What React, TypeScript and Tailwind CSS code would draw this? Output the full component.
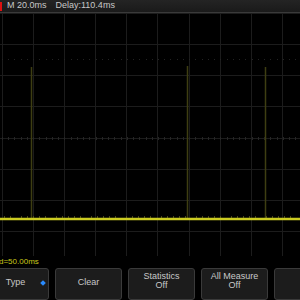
import React from "react";

const V = [2, 33, 64, 95, 126, 157, 189, 220, 251, 282];
const H = [0, 31, 62, 93, 125, 156, 187, 218];

function Scope() {
  const ticks: number[] = [];
  for (let x = 2; x < 300; x += 6.24) ticks.push(Math.round(x) + 0.5);
  const noise: number[] = [];
  for (let x = 3; x < 300; x += 7) noise.push(x + ((x * 37) % 5));
  return (
    <svg width={300} height={250} className="block">
      <rect x={0} y={0} width={300} height={250} fill="#000" />
      {V.map((x) => (
        <line key={"v" + x} x1={x + 0.5} y1={0} x2={x + 0.5} y2={249} stroke="#1c1c1c" strokeWidth={1} />
      ))}
      {H.map((y) => (
        <line key={"h" + y} x1={0} y1={y + 0.5} x2={300} y2={y + 0.5} stroke="#1c1c1c" strokeWidth={1} />
      ))}
      <line x1={0} y1={249.5} x2={300} y2={249.5} stroke="#353535" strokeWidth={1} />
      {ticks.map((x) => (
        <line key={"t" + x} x1={x} y1={124} x2={x} y2={127} stroke="#262626" strokeWidth={1} />
      ))}
      {ticks.map((x) => (
        <rect key={"d" + x} x={x - 0.5} y={46} width={1} height={1} fill="#242424" />
      ))}
      <line x1={31.5} y1={54} x2={31.5} y2={206} stroke="#3e3e12" strokeWidth={1.5} />
      <line x1={187.5} y1={53} x2={187.5} y2={206} stroke="#3e3e12" strokeWidth={1.5} />
      <line x1={265.5} y1={54} x2={265.5} y2={206} stroke="#3e3e12" strokeWidth={1.5} />
      {noise.map((x) => (
        <rect key={"n" + x} x={x} y={203} width={1} height={2} fill="#4a4a18" />
      ))}
      <line x1={0} y1={206} x2={300} y2={206} stroke="#cccc22" strokeWidth={2.5} />
    </svg>
  );
}

function Btn({ l1, l2, children }: { l1: string; l2?: string; children?: React.ReactNode }) {
  return (
    <div className="relative w-[67px] h-[32px] shrink-0 rounded-[3px] bg-[#1c1c1c] border border-[#3a3a3a] flex flex-col items-center pt-[6px] text-[9px] leading-[9px] text-[#c8c8c8]">
      {l2 ? (
        <>
          <span className="mt-[-3px]">{l1}</span>
          <span>{l2}</span>
        </>
      ) : (
        <span className="mt-[3px]">{l1}</span>
      )}
      {children}
    </div>
  );
}

export default function App() {
  return (
    <div className="w-[300px] h-[300px] bg-black overflow-hidden flex flex-col font-['Liberation_Sans_Narrow','Liberation_Sans',Arial,sans-serif]">
      <div className="h-[13px] shrink-0 flex items-center bg-gradient-to-b from-[#242424] to-[#1a1a1a] border-b border-[#3a3a3a] text-[9px] text-[#c8c8c8]">
        <div className="w-[2px] h-[9px] bg-[#dd1111]" />
        <span className="ml-[5px]">M 20.0ms</span>
        <span className="ml-[9px]">Delay:110.4ms</span>
      </div>
      <Scope />
      <div className="h-[12px] shrink-0 flex items-center text-[8px] text-[#c8c81a] ml-[-1px]">d=50.00ms</div>
      <div className="flex gap-[6px] ml-[-18px]">
        <Btn l1="Type">
          <div className="absolute left-[58px] top-[12px] w-[4px] h-[4px] rotate-45 bg-[#2a8cff]" />
        </Btn>
        <Btn l1="Clear" />
        <Btn l1="Statistics" l2="Off" />
        <Btn l1="All Measure" l2="Off" />
        <Btn l1="" />
      </div>
    </div>
  );
}
